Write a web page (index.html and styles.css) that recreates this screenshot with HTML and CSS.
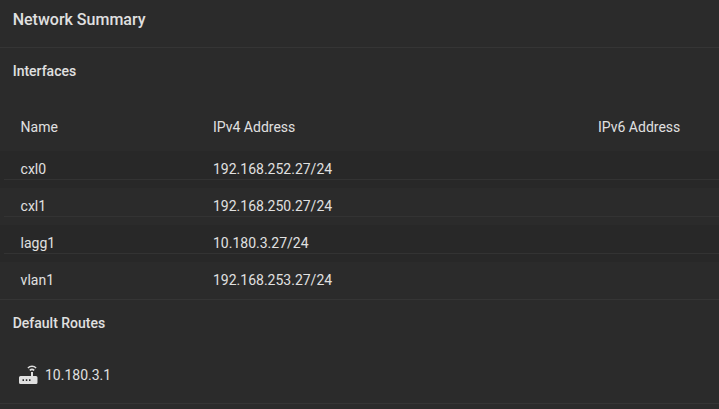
FILE: index.html
```html
<!DOCTYPE html>
<html lang="en">
<head>
<meta charset="utf-8">
<title>Network Summary</title>
<link rel="stylesheet" href="styles.css">
</head>
<body>
<section class="card">
  <header class="card-title">Network Summary</header>
  <h2 class="sub">Interfaces</h2>
  <div class="table">
    <div class="row head">
      <div class="cell">Name</div><div class="cell">IPv4 Address</div><div class="cell">IPv6 Address</div>
    </div>
    <div class="row alt"><div class="line"><div class="cell">cxl0</div><div class="cell">192.168.252.27/24</div><div class="cell"></div></div></div>
    <div class="row"><div class="line"><div class="cell">cxl1</div><div class="cell">192.168.250.27/24</div><div class="cell"></div></div></div>
    <div class="row alt"><div class="line"><div class="cell">lagg1</div><div class="cell">10.180.3.27/24</div><div class="cell"></div></div></div>
    <div class="row"><div class="line last"><div class="cell">vlan1</div><div class="cell">192.168.253.27/24</div><div class="cell"></div></div></div>
  </div>
  <h2 class="sub routes">Default Routes</h2>
  <div class="route">
    <svg class="icon" viewBox="0 0 24 24" width="24" height="24" aria-hidden="true">
      <path fill="currentColor" fill-rule="evenodd" d="M4.5 13H15V9H17V13H20A1.5 1.5 0 0 1 21.5 14.5V19.5A1.5 1.5 0 0 1 20 21H4.5A1.5 1.5 0 0 1 3 19.5V14.5A1.5 1.5 0 0 1 4.5 13ZM6.5 16.2V18H8V16.2ZM9.8 16.2V18H11.3V16.2ZM13 16.2V18H14.5V16.2Z"/>
      <path fill="none" stroke="currentColor" stroke-width="1.5" d="M13.8 7.4A3.2 3.2 0 0 1 18.2 7.4M11.9 5A5.8 5.8 0 0 1 20.1 5"/>
    </svg>
    <span>10.180.3.1</span>
  </div>
</section>
</body>
</html>
```

FILE: styles.css
```css
* { box-sizing: border-box; }
html, body { margin: 0; height: 100%; background: #2b2b2b; }
body { font-family: Roboto, "Liberation Sans", sans-serif; font-size: 14px; color: #e0e0e0; overflow: hidden; }
.card { display: flex; flex-direction: column; }
.card-title { height: 48px; padding: 10px 12.7px 0; font-size: 16px; line-height: 20px; font-weight: 500; border-bottom: 1px solid #353535; color: #e0e0e0; }
.sub { margin: 0; padding: 15px 12.7px 0; font-size: 14px; line-height: 16px; font-weight: 500; height: 57px; }
.table { display: flex; flex-direction: column; }
.row { height: 37px; background: #2b2b2b; }
.row.head { height: 46px; display: grid; grid-template-columns: 213px 385px 1fr; align-items: start; padding-top: 14px; line-height: 16px; }
.row.alt { background: #282828; }
.head .cell:first-child { padding-left: 20.6px; }
.line { display: grid; grid-template-columns: 209px 385px 1fr; height: 29px; margin-left: 4px; padding-top: 10px; line-height: 16px; border-bottom: 1px solid #333; }
.line .cell:first-child { padding-left: 16.6px; }
.line.last { border-bottom-color: transparent; }
.routes { height: 52px; padding-top: 15px; border-top: 1px solid #353535; }
.route { display: flex; align-items: center; gap: 5px; height: 53px; padding-left: 16px; padding-bottom: 4px; border-bottom: 1px solid #353535; }
.icon { flex: none; display: block; }
```
